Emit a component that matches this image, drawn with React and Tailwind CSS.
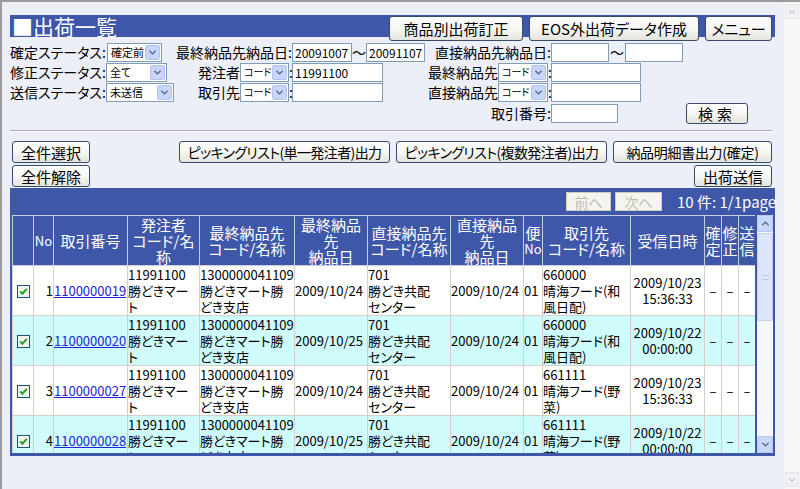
import React from 'react';
import { ChevronDown, ChevronUp } from 'lucide-react';

const rows = [
  { no: 1, id: '1100000019', lastDate: '2009/10/24', directDate: '2009/10/24', vendor: '660000\n晴海フード(和\n風日配)', recv: '2009/10/23\n15:36:33' },
  { no: 2, id: '1100000020', lastDate: '2009/10/25', directDate: '2009/10/24', vendor: '660000\n晴海フード(和\n風日配)', recv: '2009/10/22\n00:00:00' },
  { no: 3, id: '1100000027', lastDate: '2009/10/24', directDate: '2009/10/24', vendor: '661111\n晴海フード(野\n菜)', recv: '2009/10/23\n15:36:33' },
  { no: 4, id: '1100000028', lastDate: '2009/10/25', directDate: '2009/10/24', vendor: '661111\n晴海フード(野\n菜)', recv: '2009/10/22\n00:00:00' },
  { no: 5, id: '1100000029', lastDate: '2009/10/24', directDate: '2009/10/24', vendor: '662222\n晴海フード(精\n肉)', recv: '2009/10/23\n15:36:33' },
  { no: 6, id: '1100000030', lastDate: '2009/10/25', directDate: '2009/10/24', vendor: '662222\n晴海フード(精\n肉)', recv: '2009/10/22\n00:00:00' },
];

const headers = [
  [],
  ['No'],
  ['取引番号'],
  ['発注者', 'コード/名', '称'],
  ['最終納品先', 'コード/名称'],
  ['最終納品', '先', '納品日'],
  ['直接納品先', 'コード/名称'],
  ['直接納品', '先', '納品日'],
  ['便', 'No'],
  ['取引先', 'コード/名称'],
  ['受信日時'],
  ['確', '定'],
  ['修', '正'],
  ['送', '信'],
];

const colWidths = [21, 20, 74, 72, 95, 73, 83, 73, 19, 88, 74, 17, 17, 17];

function Btn({ className = '', children }) {
  return (
    <button className={`flex shrink-0 items-center justify-center whitespace-nowrap rounded-[3px] border border-[#3a4b6e] bg-linear-to-b from-white via-[#f7f7f4] to-[#e4e3dd] leading-none text-black ${className}`}>
      {children}
    </button>
  );
}

function Sel({ value, className = '', textClass = 'text-[11px]' }) {
  return (
    <div className={`flex h-[19px] shrink-0 items-center border border-[#7f9db9] bg-white ${className}`}>
      <span className={`min-w-0 flex-1 overflow-hidden whitespace-nowrap pl-[3px] leading-none ${textClass}`}>{value}</span>
      <span className="mr-[1px] flex h-[15px] w-[15px] shrink-0 items-center justify-center rounded-[2px] border border-[#b3c5ef] bg-[#c6d5f9]">
        <ChevronDown size={11} strokeWidth={3} className="text-[#4d6185]" />
      </span>
    </div>
  );
}

function Field({ value = '', className = '' }) {
  return (
    <input
      readOnly
      defaultValue={value}
      className={`h-[19px] shrink-0 border border-[#7f9db9] bg-white px-[2px] text-[12px] leading-none outline-none ${className}`}
    />
  );
}

function Check() {
  return (
    <svg width="13" height="13" viewBox="0 0 13 13" className="inline-block align-middle">
      <rect x="0.5" y="0.5" width="12" height="12" fill="#f3f3ef" stroke="#1c5180" />
      <path d="M3.2 6.4 L5.4 8.7 L9.8 3.9" stroke="#21a121" strokeWidth="2" fill="none" />
    </svg>
  );
}

function ScrollArrow({ up, pale }) {
  const Icon = up ? ChevronUp : ChevronDown;
  return (
    <div
      className={
        pale
          ? 'flex h-[15px] w-[14px] items-center justify-center rounded-[2px] border border-[#e1e4ea] bg-[#f1f2f5]'
          : 'flex h-[17px] w-[16px] items-center justify-center rounded-[2px] border border-[#b4c6f2] bg-[#c9d7fb]'
      }
    >
      <Icon size={pale ? 10 : 11} strokeWidth={3} className={pale ? 'text-[#c8ccd4]' : 'text-[#4d6185]'} />
    </div>
  );
}

export default function App() {
  return (
    <div className="flex h-[489px] w-[800px] overflow-hidden border-l-2 border-t-2 border-[#9c9c9c] bg-[#edeff8] font-['Noto_Sans_CJK_JP','Noto_Sans_CJK_SC',sans-serif] text-black [font-feature-settings:'palt']">
      <main className="w-[781px] pl-[8px] pt-[13px]">
        {/* title bar */}
        <div className="flex h-[22px] w-[765px] items-start bg-[#3f57a9] pr-[3px]">
          <h1 className="pl-[2px] text-[21px] leading-[22px] text-white">■出荷一覧</h1>
          <div className="ml-auto flex gap-[6px] pt-[1px]">
            <Btn className="h-[25px] w-[134px] text-[15px]">商品別出荷訂正</Btn>
            <Btn className="h-[25px] w-[170px] text-[15px]">EOS外出荷データ作成</Btn>
            <Btn className="h-[25px] w-[67px] text-[15px]">メニュー</Btn>
          </div>
        </div>

        {/* search conditions */}
        <div className="mt-[5px] grid w-[765px] grid-cols-[96px_69px_117px_135px_124px_1fr] grid-rows-[20px_20px_20px_22px] items-center text-[14px] leading-[16px]">
          <span className="whitespace-nowrap">確定ステータス:</span>
          <Sel value="確定前" className="ml-[1px] w-[55px]" />
          <span className="text-right">最終納品先納品日:</span>
          <div className="flex items-center">
            <Field value="20091007" className="w-[60px]" />
            <span className="w-[14px] text-center">～</span>
            <Field value="20091107" className="w-[59px]" />
          </div>
          <span className="text-right">直接納品先納品日:</span>
          <div className="flex items-center">
            <Field className="w-[58px]" />
            <span className="w-[16px] text-center">～</span>
            <Field className="w-[58px]" />
          </div>

          <span className="whitespace-nowrap">修正ステータス:</span>
          <Sel value="全て" className="w-[61px]" />
          <div className="flex items-center justify-end">
            <span>発注者</span>
            <Sel value="コード" textClass="text-[10px]" className="w-[49px]" />
            <span className="w-[3px]">:</span>
          </div>
          <Field value="11991100" className="w-[91px]" />
          <div className="flex items-center justify-end">
            <span>最終納品先</span>
            <Sel value="コード" textClass="text-[10px]" className="w-[50px]" />
            <span className="w-[3px]">:</span>
          </div>
          <Field className="w-[90px]" />

          <span className="whitespace-nowrap">送信ステータス:</span>
          <Sel value="未送信" className="w-[68px]" />
          <div className="flex items-center justify-end">
            <span>取引先</span>
            <Sel value="コード" textClass="text-[10px]" className="w-[49px]" />
            <span className="w-[3px]">:</span>
          </div>
          <Field className="w-[91px]" />
          <div className="flex items-center justify-end">
            <span>直接納品先</span>
            <Sel value="コード" textClass="text-[10px]" className="w-[50px]" />
            <span className="w-[3px]">:</span>
          </div>
          <Field className="w-[90px]" />

          <span className="col-start-5 text-right">取引番号:</span>
          <div className="flex items-center">
            <Field className="w-[67px]" />
            <Btn className="ml-[68px] h-[21px] w-[62px] text-[15px] tracking-[4px]">検索</Btn>
          </div>
        </div>

        <div className="mt-[6px] w-[762px] border-b border-t border-b-white border-t-[#a9a9b0]" />

        {/* action buttons */}
        <div className="mt-[9px] flex w-[765px] justify-between pl-[2px] pr-[3px]">
          <div className="flex flex-col gap-[2px]">
            <Btn className="h-[22px] w-[78px] text-[15px]">全件選択</Btn>
            <Btn className="h-[22px] w-[78px] text-[15px]">全件解除</Btn>
          </div>
          <div className="flex flex-col items-end gap-[2px]">
            <div className="flex gap-[6px]">
              <Btn className="h-[22px] w-[211px] text-[14px] tracking-[-0.6px]">ピッキングリスト(単一発注者)出力</Btn>
              <Btn className="h-[22px] w-[211px] text-[14px] tracking-[-0.6px]">ピッキングリスト(複数発注者)出力</Btn>
              <Btn className="h-[22px] w-[159px] text-[14px] tracking-[-0.3px]">納品明細書出力(確定)</Btn>
            </div>
            <Btn className="h-[22px] w-[78px] text-[15px]">出荷送信</Btn>
          </div>
        </div>

        {/* result list */}
        <section className="mt-[1px] w-[765px] overflow-hidden bg-[#3f57a9] px-[2px] pb-[3px]">
          <div className="flex h-[27px] items-center justify-end">
            <button className="h-[19px] w-[45px] border border-[#cfcdc2] bg-[#f5f4ef] text-[14px] leading-none text-[#bfbcb2]">前へ</button>
            <button className="ml-[4px] h-[19px] w-[47px] border border-[#cfcdc2] bg-[#f5f4ef] text-[14px] leading-none text-[#bfbcb2]">次へ</button>
            <span className="ml-[15px] w-[96px] shrink-0 whitespace-nowrap text-[15px] leading-none text-white">10 件: 1/1page</span>
          </div>

          <div className="flex h-[238px] gap-[2px]">
            <div className="w-[743px] overflow-hidden bg-white">
              <table className="w-[743px] table-fixed border-collapse">
                <colgroup>
                  {colWidths.map((w, i) => (
                    <col key={i} style={{ width: w }} />
                  ))}
                </colgroup>
                <thead>
                  <tr className="h-[50px] bg-[#3f57a9]">
                    {headers.map((lines, i) => (
                      <th
                        key={i}
                        className="border border-[#c9cde0] p-0 text-center align-middle text-[15px] font-normal leading-[16px] whitespace-nowrap text-white"
                      >
                        {lines.map((l, j) => (
                          <div key={j} className={l === 'No' ? 'text-[13px]' : ''}>{l}</div>
                        ))}
                      </th>
                    ))}
                  </tr>
                </thead>
                <tbody className="text-[13px] leading-[16px] [&_td]:border [&_td]:border-[#d6d0c6] [&_td]:p-0 [&_td]:align-middle [&_td]:whitespace-pre-line">
                  {rows.map((r, i) => (
                    <tr key={r.id} className={i % 2 ? 'h-[50px] bg-[#cffcfc]' : 'h-[50px] bg-white'}>
                      <td className="text-center"><Check /></td>
                      <td className="text-right">{r.no}</td>
                      <td>
                        <a href="#" className="text-[#2323d6] underline">{r.id}</a>
                      </td>
                      <td>{'11991100\n勝どきマー\nト'}</td>
                      <td>{'1300000041109\n勝どきマート勝\nどき支店'}</td>
                      <td>{r.lastDate}</td>
                      <td>{'701\n勝どき共配\nセンター'}</td>
                      <td>{r.directDate}</td>
                      <td>01</td>
                      <td>{r.vendor}</td>
                      <td className="text-center">{r.recv}</td>
                      <td className="text-center">–</td>
                      <td className="text-center">–</td>
                      <td className="text-center">–</td>
                    </tr>
                  ))}
                </tbody>
              </table>
            </div>

            {/* list scrollbar */}
            <div className="flex w-[16px] flex-col bg-[#f6f7fc]">
              <ScrollArrow up />
              <div className="mt-[1px] flex h-[88px] items-center justify-center rounded-[2px] border border-[#c3d1f4] bg-[#dde6fc]">
                <div className="h-[5px] w-[7px] border-y border-[#b9c7ee]" />
              </div>
              <div className="flex-1" />
              <ScrollArrow />
            </div>
          </div>
        </section>
      </main>

      {/* page scrollbar */}
      <aside className="flex w-[17px] flex-col items-center justify-between border-l border-[#f0f1f4] bg-[#f8f8fa] pb-[2px] pt-[2px]">
        <ScrollArrow up pale />
        <ScrollArrow pale />
      </aside>
    </div>
  );
}
